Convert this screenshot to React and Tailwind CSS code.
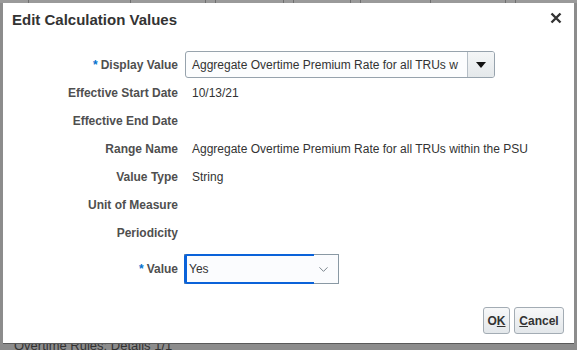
import { ChevronDown } from 'lucide-react';

const rows = [
  { label: 'Effective Start Date', value: '10/13/21' },
  { label: 'Effective End Date', value: '' },
  { label: 'Range Name', value: 'Aggregate Overtime Premium Rate for all TRUs within the PSU' },
  { label: 'Value Type', value: 'String' },
  { label: 'Unit of Measure', value: '' },
  { label: 'Periodicity', value: '' },
];

const Label = ({ children, required }) => (
  <div className="w-[182px] shrink-0 pr-[7px] text-right text-[12px] font-bold text-[#4f4f4f]">
    {required && <span className="mr-[3px] align-top text-[12px] text-[#0572ce]">*</span>}
    {children}
  </div>
);

export default function App() {
  return (
    <div
      className="relative h-[350px] w-[577px] overflow-hidden bg-[#8c8c8c]"
      style={{ fontFamily: '"Liberation Sans", Arial, sans-serif' }}
    >
      {/* page behind the dialog */}
      <div className="flex h-[3px] bg-[#9a9a9a]">
        {[28, 130, 205, 215, 283, 293, 350, 360, 430, 505, 515].map((x) => (
          <div key={x} className="absolute top-0 h-[3px] w-px bg-[#6f6f6f]" style={{ left: x }} />
        ))}
      </div>

      <div className="mx-[3px] flex h-[341px] flex-col border-b border-[#5a5a5a] bg-white">
        {/* header */}
        <div className="flex h-[48px] items-start justify-between pl-[9px] pr-[12px] pt-[6px]">
          <h1 className="text-[15px] font-bold text-[#333]">Edit Calculation Values</h1>
          <svg width="12" height="12" viewBox="0 0 12 12" className="mt-[3px]">
            <path d="M1.5 1.5 L10.5 10.5 M10.5 1.5 L1.5 10.5" stroke="#333" strokeWidth="2.4" />
          </svg>
        </div>

        {/* form */}
        <div className="flex flex-col">
          <div className="flex h-[27px] items-center">
            <Label required>Display Value</Label>
            <div className="flex h-[27px] w-[310px] overflow-hidden rounded-[3px] border border-[#97a3ad] bg-[#fcfdfe]">
              <div className="flex flex-1 items-center overflow-hidden whitespace-nowrap pl-[6px] text-[12px] text-[#333]">
                Aggregate Overtime Premium Rate for all TRUs w
              </div>
              <div className="flex w-[27px] items-center justify-center border-l border-[#b5bec6] bg-gradient-to-b from-[#f4f6f7] to-[#e4e8ea]">
                <svg width="10" height="6" viewBox="0 0 10 6">
                  <path d="M0 0 H10 L5 6 Z" fill="#111" />
                </svg>
              </div>
            </div>
          </div>

          <div className="mt-[1px] flex flex-col">
            {rows.map((r) => (
              <div key={r.label} className="flex h-[28px] items-center">
                <Label>{r.label}</Label>
                <div className="pl-[7px] text-[12px] text-[#333]">{r.value}</div>
              </div>
            ))}
          </div>

          <div className="mt-[7px] flex h-[30px] items-center">
            <div className="w-[181px] shrink-0 pr-[6px] text-right text-[12px] font-bold text-[#4f4f4f]">
              <span className="mr-[3px] align-top text-[12px] text-[#0572ce]">*</span>
              Value
            </div>
            <div className="relative flex h-[30px] w-[155px] items-center border border-[#8a99a4] bg-[#fbfcfe] pl-[4px] text-[12px] text-[#333]">
              <div className="absolute -left-px -top-px h-[30px] w-[130px] rounded-l-[3px] border-y-2 border-l-[3px] border-[#0a62d9]" />
              <span className="relative">Yes</span>
              <ChevronDown className="absolute right-[7px] top-[7px] h-[15px] w-[15px] text-[#68737d]" strokeWidth={1.4} />
            </div>
          </div>
        </div>

        {/* footer */}
        <div className="mt-[23px] flex justify-end gap-[4px] pr-[10px]">
          <button className="h-[27px] w-[27px] rounded-[3px] border border-[#a3acb4] bg-gradient-to-b from-[#f7f8f9] to-[#e3e7ea] text-[12px] font-bold text-[#333]">
            O<span className="underline">K</span>
          </button>
          <button className="h-[27px] w-[50px] rounded-[3px] border border-[#a3acb4] bg-gradient-to-b from-[#f7f8f9] to-[#e3e7ea] text-[12px] font-bold text-[#333]">
            <span className="underline">C</span>ancel
          </button>
        </div>
      </div>

      <div className="overflow-hidden whitespace-nowrap pl-[14px] text-[13px] leading-[12px] text-[#333]">
        <div className="-mt-[4px]">Overtime Rules: Details 1/1</div>
      </div>
    </div>
  );
}
